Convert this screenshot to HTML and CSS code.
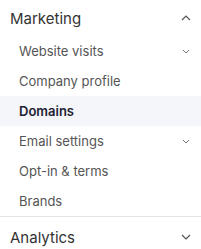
FILE: index.html
```html
<!DOCTYPE html>
<html>
<head>
<meta charset="utf-8">
<link rel="stylesheet" href="styles.css">
</head>
<body>
<nav class="nav">
  <div class="group">
    <div class="group-head">
      <span>Marketing</span>
      <svg class="chev-lg" width="10" height="6" viewBox="0 0 10 6"><path d="M1 5 L5 1 L9 5" fill="none" stroke="#555" stroke-width="1.2"/></svg>
    </div>
    <ul class="items">
      <li class="item"><span>Website visits</span><svg class="chev-sm" width="8" height="5" viewBox="0 0 8 5"><path d="M1 1 L4 4 L7 1" fill="none" stroke="#777" stroke-width="1"/></svg></li>
      <li class="item"><span>Company profile</span></li>
      <li class="item active"><span>Domains</span></li>
      <li class="item"><span>Email settings</span><svg class="chev-sm" width="8" height="5" viewBox="0 0 8 5"><path d="M1 1 L4 4 L7 1" fill="none" stroke="#777" stroke-width="1"/></svg></li>
      <li class="item"><span>Opt-in &amp; terms</span></li>
      <li class="item"><span>Brands</span></li>
    </ul>
  </div>
  <div class="group bordered">
    <div class="group-head">
      <span>Analytics</span>
      <svg class="chev-lg" width="10" height="6" viewBox="0 0 10 6"><path d="M1 1 L5 5 L9 1" fill="none" stroke="#555" stroke-width="1.2"/></svg>
    </div>
  </div>
</nav>
</body>
</html>
```
FILE: styles.css
```css
html, body { margin: 0; padding: 0; background: #fff; }
body { font-family: Inter, "Noto Sans", sans-serif; width: 201px; height: 249px; overflow: hidden; }
.nav { display: flex; flex-direction: column; }
.group-head {
  height: 36px;
  display: flex; align-items: center; justify-content: space-between;
  padding: 0 10px 0 10px;
  font-size: 15px; color: #333;
}
.chev-lg { margin-right: 0; }
.items { list-style: none; margin: 0; padding: 0; }
.item {
  height: 30px;
  display: flex; align-items: center; justify-content: space-between;
  padding: 0 11px 0 19px;
  font-size: 13px; color: #555;
}
.item.active { background: #f4f6f9; color: #222233; font-weight: 600; }
.bordered { border-top: 1px solid #e3e3e3; }
.bordered .group-head { height: 40px; }
```
